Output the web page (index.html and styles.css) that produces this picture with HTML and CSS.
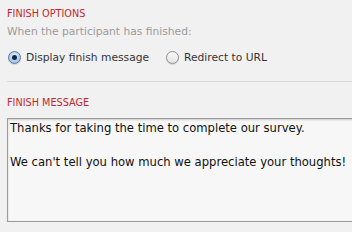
FILE: index.html
```html
<!DOCTYPE html>
<html>
<head>
<meta charset="utf-8">
<link rel="stylesheet" href="styles.css">
</head>
<body>
<div class="page">
  <section class="section">
    <h2 class="heading">FINISH OPTIONS</h2>
    <p class="hint">When the participant has finished:</p>
    <div class="radios">
      <label class="radio"><span class="dot checked"></span>Display finish message</label>
      <label class="radio"><span class="dot"></span>Redirect to URL</label>
    </div>
  </section>
  <section class="section msg">
    <h2 class="heading">FINISH MESSAGE</h2>
    <div class="textarea">Thanks for taking the time to complete our survey.<br><br>We can't tell you how much we appreciate your thoughts!</div>
  </section>
</div>
</body>
</html>
```
FILE: styles.css
```css
html, body {
  margin: 0;
  padding: 0;
  background: #f2f1f1;
  overflow: hidden;
}
.page {
  width: 352px;
  height: 232px;
  font-family: "DejaVu Sans", Verdana, sans-serif;
  padding-left: 7px;
  box-sizing: border-box;
}
.section {
  margin: 0;
}
.heading {
  margin: 0;
  padding-top: 8px;
  font-size: 9.7px;
  line-height: 12px;
  font-weight: normal;
  color: #c1272d;
}
.hint {
  margin: 5px 0 0;
  font-size: 10.7px;
  line-height: 14px;
  color: #9a9a9a;
}
.radios {
  display: flex;
  gap: 16px;
  margin-top: 8px;
  height: 20px;
  padding-bottom: 14px;
  border-bottom: 1px solid #d9d7d7;
  align-items: center;
}
.radio {
  display: flex;
  align-items: center;
  font-size: 10.7px;
  color: #333;
}
.dot {
  width: 13px;
  height: 13px;
  border-radius: 50%;
  box-sizing: border-box;
  border: 1px solid #8e8e8e;
  background: linear-gradient(#fbfbfb, #e2e2e2);
  margin-left: 1px;
  margin-right: 5px;
  position: relative;
  box-shadow: 0 1px 1px rgba(0,0,0,0.12);
}
.dot.checked {
  border-color: #56779f;
  background: radial-gradient(circle at 50% 35%, #e3eefc, #8db3e6);
}
.dot.checked::after {
  content: "";
  position: absolute;
  left: 3px;
  top: 3px;
  width: 5px;
  height: 5px;
  border-radius: 50%;
  background: #16263d;
}
.msg .heading {
  padding-top: 15px;
}
.textarea {
  margin-top: 9px;
  width: 360px;
  height: 104px;
  box-sizing: border-box;
  border: 1px solid #9b9b9b;
  background: #f7f7f7;
  box-shadow: inset 0 1px 2px rgba(0,0,0,0.18);
  padding: 1px 2px;
  font-size: 11.6px;
  line-height: 17px;
  color: #111;
  white-space: nowrap;
}
```
